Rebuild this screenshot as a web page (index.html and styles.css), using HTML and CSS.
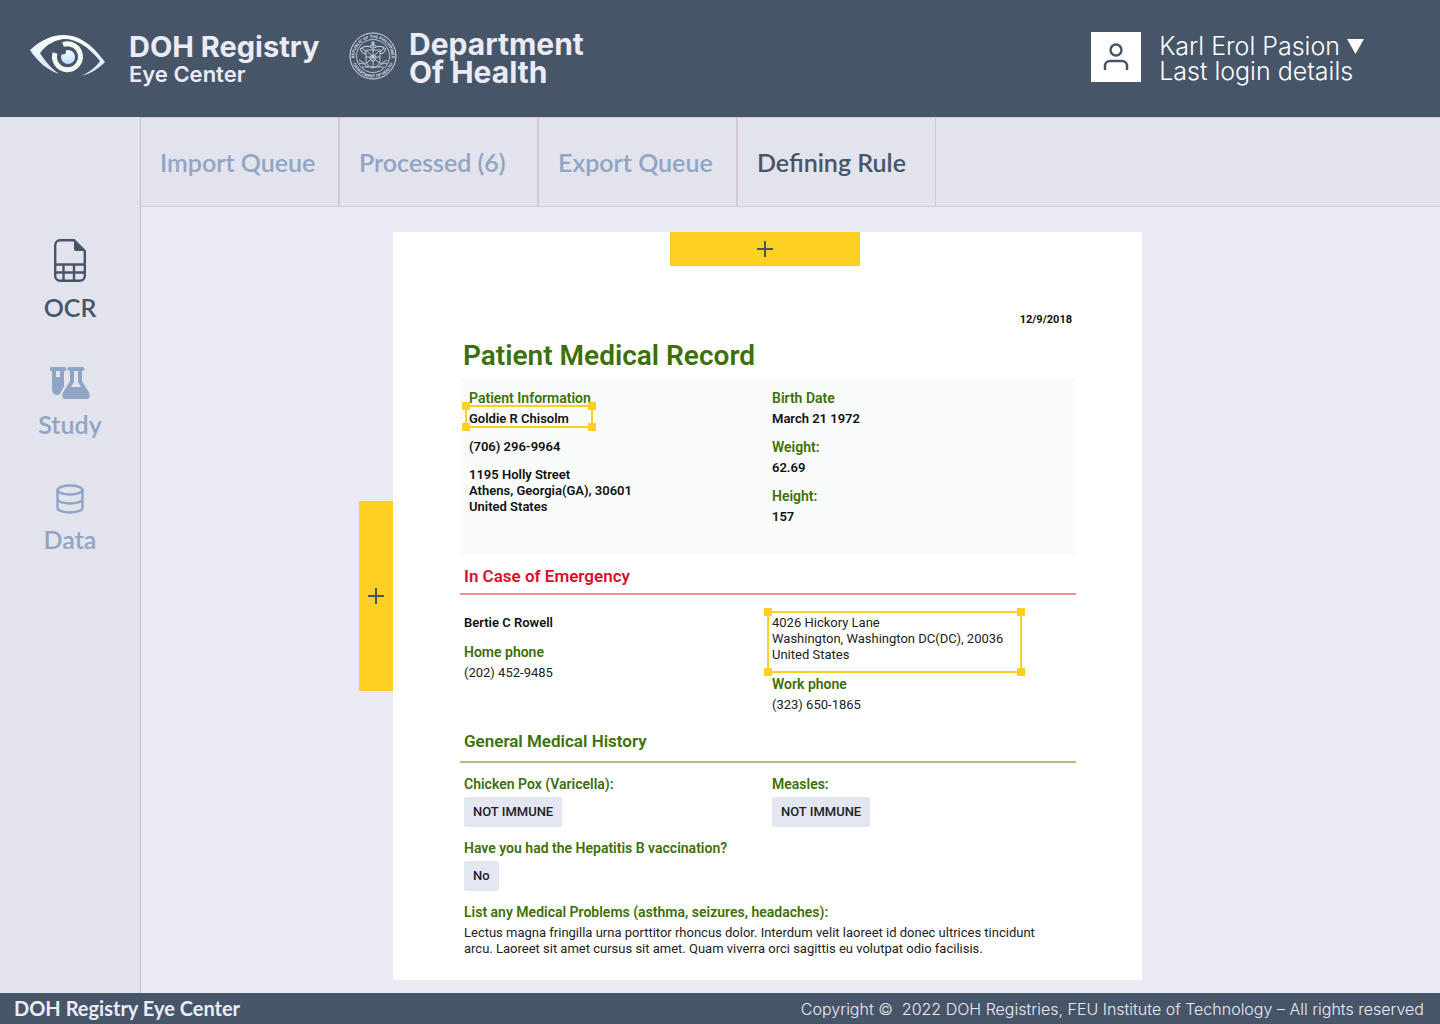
FILE: index.html
```html
<!DOCTYPE html>
<html lang="en">
<head>
<meta charset="utf-8">
<meta name="viewport" content="width=device-width, initial-scale=1">
<title>DOH Registry Eye Center</title>
<link rel="stylesheet" href="styles.css">
</head>
<body>
<header class="topbar">
  <div class="brand">
    <svg class="brand-eye" viewBox="0 0 76 42" width="76" height="42" aria-hidden="true">
      <defs>
        <linearGradient id="lid" x1="0" y1="0" x2="0" y2="1"><stop offset="0" stop-color="#fff"/><stop offset="1" stop-color="#d3e8fb"/></linearGradient>
        <linearGradient id="pupil" x1="0" y1="0" x2="0" y2="1"><stop offset="0" stop-color="#fbfdff"/><stop offset="1" stop-color="#bfdcf8"/></linearGradient>
      </defs>
      <path fill="url(#lid)" d="M0 15C12 4 23 0 34 0c14 0 27 8 41 27-6 6-14 12-24 14 9-4 15-9 19-15C58 11 47 5 36 4 26 4 17 9 10 18c5 8 10 14 19 21C17 35 7 26 0 15z"/>
      <path fill="none" stroke="#f1faee" stroke-width="5" d="M33 9.500A13 13 0 1 1 25 18"/>
      <circle cx="38" cy="22" r="7" fill="url(#pupil)"/>
      <circle cx="33" cy="16.500" r="3" fill="#475568"/>
    </svg>
    <div class="brand-text">
      <span class="brand-name">DOH Registry</span>
      <span class="brand-sub">Eye Center</span>
    </div>
  </div>
  <div class="department">
    <svg class="seal" viewBox="0 0 48 48" width="48" height="48" aria-hidden="true">
      <g fill="none" stroke="#d9dde6">
        <circle cx="24" cy="24" r="23" stroke-width="1"/>
        <circle cx="24" cy="24" r="16.500" stroke-width=".8"/>
        <path stroke-width=".8" d="M17 18h14v11q-1 5-7 7-6-2-7-7zM24 18v18M17 25h14M18 19l12 12M30 19L18 31"/>
        <circle cx="24" cy="26" r="3" stroke-width=".8"/>
        <path stroke-width="1" d="M23 16Q17 12 11 17q2 5 6 5M25 16q6-4 12 1-2 5-6 5M13 16l4 4M35 16l-4 4M24 9v9M22 11h4M21 14q3-3 6 0"/>
        <path stroke-width=".8" d="M10 28l7 4M10 31q6 0 9 4M38 28l-7 4M38 31q-6 0-9 4M13 35h22"/>
      </g>
      <path id="arc-top" fill="none" d="M5.800 28A18.500 18.500 0 1 1 42.200 28"/>
      <path id="arc-bottom" fill="none" d="M3.500 30A21.300 21.300 0 0 0 44.500 30"/>
      <text class="seal-text"><textPath href="#arc-top" startOffset="50%">REPUBLIC OF THE PHILIPPINES</textPath></text>
      <text class="seal-text"><textPath href="#arc-bottom" startOffset="50%">DEPARTMENT OF HEALTH</textPath></text>
    </svg>
    <span class="department-name">Department<br>Of Health</span>
  </div>
  <div class="account">
    <span class="avatar">
      <svg viewBox="0 0 26 28" width="26" height="28" fill="none" stroke="#475568" stroke-width="2.500" stroke-linecap="round" aria-hidden="true"><circle cx="13" cy="7" r="5.500"/><path d="M2 26v-3a5 5 0 0 1 5-5h12a5 5 0 0 1 5 5v3"/></svg>
    </span>
    <button class="account-menu" type="button">
      <span class="account-name">Karl Erol Pasion <svg viewBox="0 0 17 15" width="17" height="15" aria-hidden="true"><path fill="#fff" d="M0 0h17L8.500 15z"/></svg></span>
      <span>Last login details</span>
    </button>
  </div>
</header>

<div class="shell">
  <nav class="sidebar" aria-label="Sections">
    <a class="side-link side-link-active" href="#ocr">
      <svg viewBox="0 0 32 43" width="32" height="43" aria-hidden="true">
        <path fill="none" stroke="currentColor" stroke-width="2.400" d="M20 1.200H6a5 5 0 0 0-4.800 5v30.600a5 5 0 0 0 5 5h19.600a5 5 0 0 0 5-5V12zM1 25.500h30M1 33.500h30M9.500 25.500V42M20 25.500V42"/>
        <path fill="currentColor" d="M20 1l11 11h-9a2 2 0 0 1-2-2z"/>
      </svg>
      OCR
    </a>
    <a class="side-link" href="#study">
      <svg viewBox="0 0 40 32" width="40" height="32" fill="currentColor" aria-hidden="true">
        <path fill-rule="evenodd" d="M1.500 0h13a1.500 1.500 0 0 1 0 4H14v15.500l-3 5.500q-1 3-4 3a5 5 0 0 1-5-5V4h-.5a1.500 1.500 0 0 1 0-4zM6 4v6h4V4z"/>
        <path fill-rule="evenodd" d="M19.500 0h13a1.500 1.500 0 0 1 0 4H32v10l7 11.500q2.500 6.500-3 6.500H16q-5.500 0-3-6.500L20 14V4h-.5a1.500 1.500 0 0 1 0-4zM24 4v11l-3 5h10l-3-5V4z"/>
      </svg>
      Study
    </a>
    <a class="side-link" href="#data">
      <svg viewBox="0 0 28 30" width="28" height="30" fill="none" stroke="currentColor" stroke-width="2.400" aria-hidden="true"><ellipse cx="14" cy="6" rx="12.500" ry="4.500"/><path d="M1.500 6v18c0 2.500 5.500 4.500 12.500 4.500s12.500-2 12.500-4.500V6M1.500 15c0 2.500 5.500 4.500 12.500 4.500s12.500-2 12.500-4.500"/></svg>
      Data
    </a>
  </nav>

  <div class="workspace">
    <nav class="tabs" aria-label="Queues">
      <a class="tab" href="#import">Import Queue</a>
      <a class="tab" href="#processed">Processed (6)</a>
      <a class="tab" href="#export">Export Queue</a>
      <a class="tab tab-active" href="#rules" aria-current="page">Defining Rule</a>
    </nav>

    <main class="canvas">
      <button class="add-rule add-row" type="button" aria-label="Add row rule"><svg viewBox="0 0 16 16" width="16" height="16" aria-hidden="true"><path stroke="#475568" stroke-width="2" d="M8 0v16M0 8h16"/></svg></button>
      <article class="sheet">
        <button class="add-rule add-column" type="button" aria-label="Add column rule"><svg viewBox="0 0 16 16" width="16" height="16" aria-hidden="true"><path stroke="#475568" stroke-width="2" d="M8 0v16M0 8h16"/></svg></button>
        <p class="sheet-date">12/9/2018</p>
        <h1 class="sheet-title">Patient Medical Record</h1>

        <section class="columns panel">
          <div class="column strong">
            <div class="field"><h3 class="label">Patient Information</h3>
              <p class="selectable">Goldie R Chisolm<span class="selection selection-name"><i></i><i></i><i></i><i></i></span></p></div>
            <p>(706) 296-9964</p>
            <p>1195 Holly Street<br>Athens, Georgia(GA), 30601<br>United States</p>
          </div>
          <div class="column strong">
            <div class="field"><h3 class="label">Birth Date</h3><p>March 21 1972</p></div>
            <div class="field"><h3 class="label">Weight:</h3><p>62.69</p></div>
            <div class="field"><h3 class="label">Height:</h3><p>157</p></div>
          </div>
        </section>

        <h2 class="section-title section-title-alert">In Case of Emergency</h2>
        <section class="columns emergency">
          <div class="column">
            <p class="strong">Bertie C Rowell</p>
            <div class="field"><h3 class="label">Home phone</h3><p>(202) 452-9485</p></div>
          </div>
          <div class="column">
            <p class="selectable">4026 Hickory Lane<br>Washington, Washington DC(DC), 20036<br>United States<span class="selection selection-address"><i></i><i></i><i></i><i></i></span></p>
            <div class="field"><h3 class="label">Work phone</h3><p>(323) 650-1865</p></div>
          </div>
        </section>

        <h2 class="section-title">General Medical History</h2>
        <section class="history">
          <div class="columns">
            <div class="column"><div class="field"><h3 class="label">Chicken Pox (Varicella):</h3><p class="answer">NOT IMMUNE</p></div></div>
            <div class="column"><div class="field"><h3 class="label">Measles:</h3><p class="answer">NOT IMMUNE</p></div></div>
          </div>
          <div class="column"><div class="field"><h3 class="label">Have you had the Hepatitis B vaccination?</h3><p class="answer">No</p></div></div>
          <div class="column"><div class="field"><h3 class="label">List any Medical Problems (asthma, seizures, headaches):</h3>
            <p class="problems">Lectus magna fringilla urna porttitor rhoncus dolor. Interdum velit laoreet id donec ultrices tincidunt arcu. Laoreet sit amet cursus sit amet. Quam viverra orci sagittis eu volutpat odio facilisis.</p></div></div>
        </section>
      </article>
    </main>
  </div>
</div>

<footer class="footer">
  <strong class="footer-name">DOH Registry Eye Center</strong>
  <span class="footer-copy">Copyright ©&nbsp; 2022 DOH Registries, FEU Institute of Technology – All rights reserved</span>
</footer>
</body>
</html>
```
FILE: styles.css
```css
:root {
  --slate: #475568;
  --mist: #ebebf5;
  --panel: #e3e3ed;
  --muted: #90a5c5;
  --line: #d3c9cf;
  --yellow: #ffd024;
  --green: #3d7007;
}
* { box-sizing: border-box; }
body {
  margin: 0;
  min-height: 100vh;
  display: flex;
  flex-direction: column;
  background: var(--mist);
  color: var(--slate);
  font-family: Lato, "Open Sans", sans-serif;
}
h1, h2, h3, p { margin: 0; }
a { text-decoration: none; }
svg { display: block; flex: none; }
button { border: 0; padding: 0; font: inherit; cursor: pointer; }

/* Header */
.topbar {
  display: flex;
  align-items: flex-start;
  height: 117px;
  padding: 32px 76px 0 30px;
  background: var(--slate);
  color: var(--mist);
  font-family: Inter, sans-serif;
}
.brand { display: flex; gap: 23px; width: 319px; }
.brand-eye { margin-top: 3px; }
.brand-text { display: flex; flex-direction: column; white-space: nowrap; }
.brand-name { font-size: 29px; font-weight: 700; line-height: 30px; }
.brand-sub { font-size: 22px; font-weight: 600; line-height: 24px; }
.department { display: flex; gap: 12px; }
.seal-text { font-size: 4px; font-weight: 700; fill: #d9dde6; text-anchor: middle; }
.department-name { margin-top: -2px; font-size: 30px; font-weight: 700; line-height: 28px; white-space: nowrap; }
.account { display: flex; gap: 18px; margin-left: auto; }
.avatar { display: flex; align-items: center; justify-content: center; width: 50px; height: 50px; background: #fff; }
.account-menu {
  display: flex;
  flex-direction: column;
  background: none;
  color: #fff;
  font-size: 25px;
  font-weight: 300;
  line-height: 25px;
  text-align: left;
  white-space: nowrap;
  padding-top: 2px;
}
.account-name { display: flex; align-items: center; gap: 7px; }

/* Shell */
.shell { flex: 1; display: flex; }
.sidebar {
  flex: none;
  display: flex;
  flex-direction: column;
  gap: 45px;
  width: 141px;
  padding-top: 122px;
  border-right: 1px solid #cfbfc3;
  background: var(--panel);
}
.side-link {
  display: flex;
  flex-direction: column;
  align-items: center;
  gap: 10px;
  color: var(--muted);
  font-size: 25px;
  font-weight: 600;
  line-height: 30px;
}
.side-link-active { color: var(--slate); }
.workspace { flex: 1; min-width: 0; }
.tabs { display: flex; height: 90px; background: var(--panel); border: solid var(--line); border-width: 1px 0; }
.tab {
  display: flex;
  align-items: center;
  width: 199px;
  padding-left: 19px;
  border: solid var(--line);
  border-width: 0 1px;
  color: var(--muted);
  font-size: 25px;
  font-weight: 600;
  white-space: nowrap;
}
.tab:first-child { width: 198px; border-left: 0; }
.tab-active { color: var(--slate); }

/* Document */
.canvas { position: relative; padding: 25px 0 13px 252px; }
.sheet {
  position: relative;
  max-width: 749px;
  padding: 80px 66px 23px 67px;
  background: #fff;
  color: #222;
  font-family: Roboto, sans-serif;
  font-size: 13px;
  line-height: 16px;
}
.add-rule { position: absolute; display: flex; align-items: center; justify-content: center; background: var(--yellow); }
.add-row { z-index: 1; top: 25px; left: 529px; width: 190px; height: 34px; }
.add-column { top: 269px; left: -34px; width: 34px; height: 190px; }
.sheet-date { padding-right: 4px; color: #111; font-size: 11px; font-weight: 700; text-align: right; }
.sheet-title { margin: 12px 0 6px; padding-left: 3px; color: var(--green); font-size: 28px; font-weight: 600; line-height: 32px; }
.columns { display: grid; grid-template-columns: 1fr 1fr; }
.column { display: flex; flex-direction: column; gap: 12px; padding: 0 4px; }
.field { display: flex; flex-direction: column; align-items: flex-start; gap: 5px; }
.label { color: var(--green); font-size: 14px; font-weight: 600; }
.strong { color: #111; font-weight: 600; }
.panel { min-height: 176px; padding-top: 12px; background: #f9fbfa; }
.panel .column:first-child { padding-left: 9px; }
.section-title { padding: 12px 4px 10px; border-bottom: 2px solid #a5c286; color: var(--green); font-size: 17px; font-weight: 600; line-height: 20px; }
.section-title-alert { padding-bottom: 7px; border-color: #ec8f98; color: #d80f2a; }
.emergency { padding: 20px 0 6px; }
.emergency .column { gap: 13px; }
.history { display: flex; flex-direction: column; gap: 13px; padding-top: 13px; }
.answer { padding: 7px 9px; border-radius: 2px; background: #e3e7f2; font-weight: 500; }
.problems { padding-right: 20px; }

.selectable { position: relative; }
.selection { position: absolute; border: 2px solid var(--yellow); }
.selection-name { inset: -6px auto auto -4px; width: 128px; height: 23px; }
.selection-address { inset: -4px auto auto -5px; width: 255px; height: 62px; }
.selection i { position: absolute; width: 8px; height: 8px; background: var(--yellow); }
.selection i:nth-child(1) { top: -5px; left: -5px; }
.selection i:nth-child(2) { top: -5px; right: -5px; }
.selection i:nth-child(3) { bottom: -5px; left: -5px; }
.selection i:nth-child(4) { bottom: -5px; right: -5px; }

/* Footer */
.footer {
  display: flex;
  align-items: center;
  justify-content: space-between;
  min-height: 31px;
  padding: 0 16px 0 14px;
  background: var(--slate);
  color: var(--mist);
}
.footer-name { font-size: 20px; line-height: 31px; }
.footer-copy { font-family: Inter, sans-serif; font-size: 16px; font-weight: 300; }
```
